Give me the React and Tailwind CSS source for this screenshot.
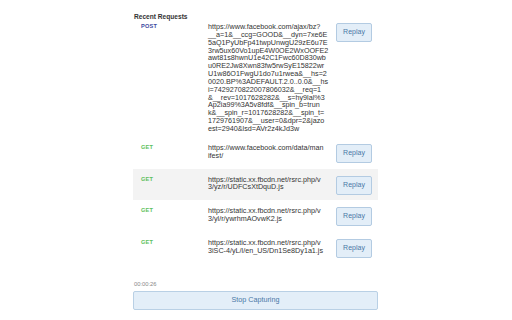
import React from "react";

const rows = [
  {
    method: "POST",
    lines: [
      "https://www.facebook.com/ajax/bz?",
      "__a=1&__ccg=GOOD&__dyn=7xe6E",
      "5aQ1PyUbFp41twpUnwgU29zE6u7E",
      "3rw5ux60Vo1upE4W0OE2WxOOFE2",
      "awt81s8hwnU1e42C1Fwc60D830wb",
      "u0RE2Jw8Xwn83fw5rwSyE15822wr",
      "U1w86O1FwgU1do7u1rwea&__hs=2",
      "0020.BP%3ADEFAULT.2.0..0.0&__hs",
      "i=7429270822007806032&__req=1",
      "&__rev=1017628282&__s=hy9lal%3",
      "Ap2ia99%3A5v8fdf&__spin_b=trun",
      "k&__spin_r=1017628282&__spin_t=",
      "1729761907&__user=0&dpr=2&jazo",
      "est=2940&lsd=AVr2z4kJd3w",
    ],
  },
  { method: "GET", lines: ["https://www.facebook.com/data/man", "ifest/"] },
  { method: "GET", lines: ["https://static.xx.fbcdn.net/rsrc.php/v", "3/yz/r/UDFCsXtDquD.js"], gray: true },
  { method: "GET", lines: ["https://static.xx.fbcdn.net/rsrc.php/v", "3/yl/r/ywrhmAOvwK2.js"] },
  { method: "GET", lines: ["https://static.xx.fbcdn.net/rsrc.php/v", "3iSC-4/yL/l/en_US/Dn1Se8Dy1a1.js"] },
];

function Row({ row, first }) {
  return (
    <div
      className={`flex items-start pl-[8px] pr-[6px] ${first ? "pt-[2px] pb-[4px]" : "pt-[7px] pb-[5.7px]"} ${row.gray ? "bg-[#f3f3f3]" : ""}`}
    >
      <div
        className={`w-[67px] shrink-0 text-[5.6px] font-bold leading-[7.85px] tracking-[0.2px] ${row.method === "POST" ? "text-[#3b4aa0]" : "text-[#5cbf5c]"}`}
      >
        {row.method}
      </div>
      <div className="w-[120px] shrink-0 text-[7.2px] leading-[7.85px] text-[#333] whitespace-nowrap">
        {row.lines.map((l, i) => (
          <div key={i}>{l}</div>
        ))}
      </div>
      <div className="flex-1" />
      <button className="w-[36px] h-[19px] shrink-0 rounded-[2px] border border-[#b3cbe2] bg-[#e3eef8] text-[7px] text-[#4a78a6] flex items-center justify-center">
        Replay
      </button>
    </div>
  );
}

export default function App() {
  return (
    <div className="w-[512px] h-[320px] bg-white overflow-hidden" style={{ fontFamily: '"Liberation Sans", Arial, sans-serif' }}>
      <div className="w-[245px] ml-[133px] pt-[13px]">
        <div className="pl-[1px] h-[8px] text-[6.6px] leading-[8px] font-semibold text-[#333]">Recent Requests</div>
        {rows.map((r, i) => (
          <Row key={i} row={r} first={i === 0} />
        ))}
        <div className="mt-[17px] pl-[1px] h-[7px] text-[5.8px] leading-[7px] text-[#888]">00:00:26</div>
        <button className="mt-[3px] w-full h-[19px] rounded-[2px] border border-[#b9d0e5] bg-[#e3eef8] text-[7.2px] text-[#4a78a6] flex items-center justify-center">
          Stop Capturing
        </button>
      </div>
    </div>
  );
}
